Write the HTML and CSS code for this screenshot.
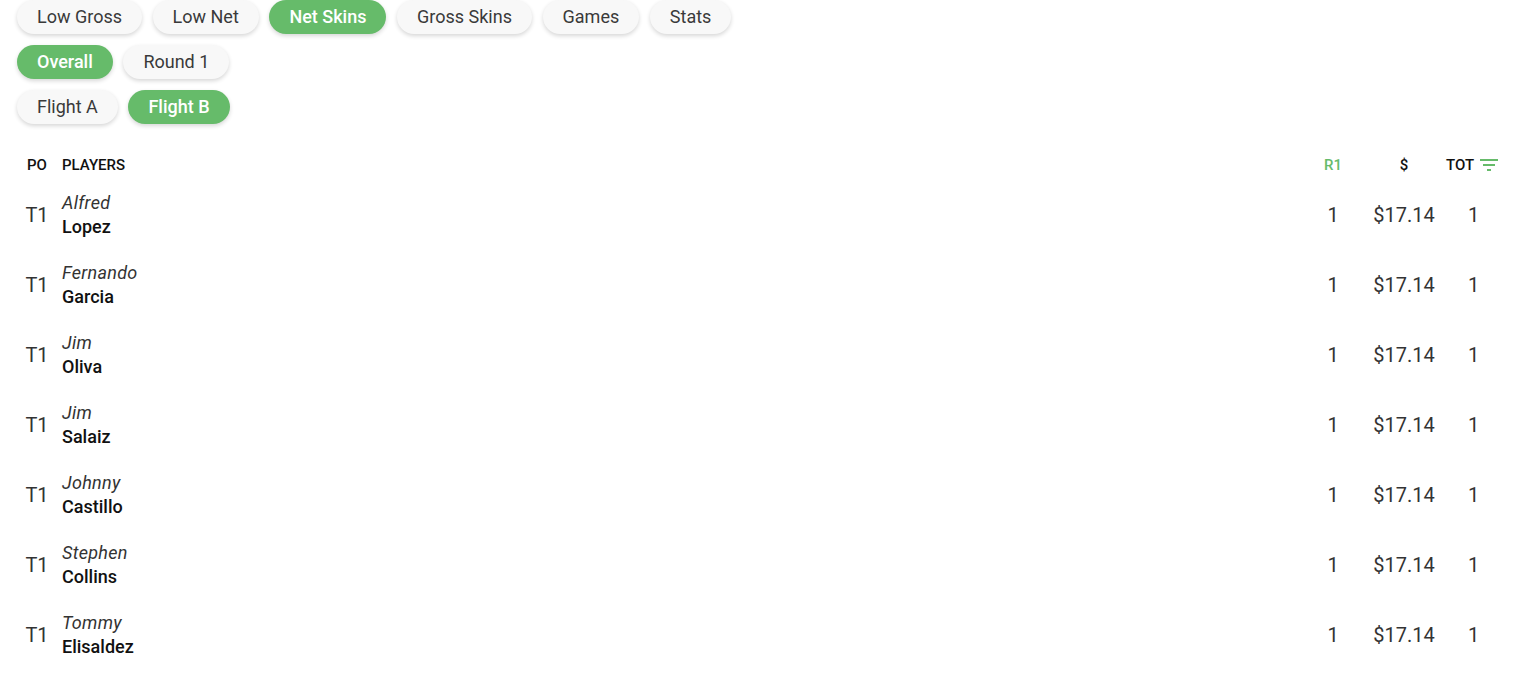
FILE: index.html
```html
<!DOCTYPE html>
<html>
<head>
<meta charset="utf-8">
<link rel="stylesheet" href="styles.css">
</head>
<body>
<div class="page">
  <div class="chips">
    <div class="chip-row">
      <span class="chip">Low Gross</span>
      <span class="chip">Low Net</span>
      <span class="chip active">Net Skins</span>
      <span class="chip">Gross Skins</span>
      <span class="chip">Games</span>
      <span class="chip">Stats</span>
    </div>
    <div class="chip-row">
      <span class="chip active">Overall</span>
      <span class="chip">Round 1</span>
    </div>
    <div class="chip-row">
      <span class="chip">Flight A</span>
      <span class="chip active">Flight B</span>
    </div>
  </div>

  <div class="table">
    <div class="row head">
      <div class="c-po">PO</div>
      <div class="c-player">PLAYERS</div>
      <div class="c-num green">R1</div>
      <div class="c-num">$</div>
      <div class="c-num tot">TOT <svg class="filter" viewBox="0 0 24 24" width="24" height="24"><path fill="#66bb6a" d="M10 18h4v-2h-4v2zM3 6v2h18V6H3zm3 7h12v-2H6v2z"/></svg></div>
    </div>

    <div class="row">
      <div class="c-po pos">T1</div>
      <div class="c-player"><div class="first">Alfred</div><div class="last">Lopez</div></div>
      <div class="c-num val">1</div><div class="c-num val">$17.14</div><div class="c-num val">1</div>
    </div>
    <div class="row">
      <div class="c-po pos">T1</div>
      <div class="c-player"><div class="first">Fernando</div><div class="last">Garcia</div></div>
      <div class="c-num val">1</div><div class="c-num val">$17.14</div><div class="c-num val">1</div>
    </div>
    <div class="row">
      <div class="c-po pos">T1</div>
      <div class="c-player"><div class="first">Jim</div><div class="last">Oliva</div></div>
      <div class="c-num val">1</div><div class="c-num val">$17.14</div><div class="c-num val">1</div>
    </div>
    <div class="row">
      <div class="c-po pos">T1</div>
      <div class="c-player"><div class="first">Jim</div><div class="last">Salaiz</div></div>
      <div class="c-num val">1</div><div class="c-num val">$17.14</div><div class="c-num val">1</div>
    </div>
    <div class="row">
      <div class="c-po pos">T1</div>
      <div class="c-player"><div class="first">Johnny</div><div class="last">Castillo</div></div>
      <div class="c-num val">1</div><div class="c-num val">$17.14</div><div class="c-num val">1</div>
    </div>
    <div class="row">
      <div class="c-po pos">T1</div>
      <div class="c-player"><div class="first">Stephen</div><div class="last">Collins</div></div>
      <div class="c-num val">1</div><div class="c-num val">$17.14</div><div class="c-num val">1</div>
    </div>
    <div class="row">
      <div class="c-po pos">T1</div>
      <div class="c-player"><div class="first">Tommy</div><div class="last">Elisaldez</div></div>
      <div class="c-num val">1</div><div class="c-num val">$17.14</div><div class="c-num val">1</div>
    </div>
  </div>
</div>
</body>
</html>
```
FILE: styles.css
```css
* { box-sizing: border-box; }
html, body { margin: 0; padding: 0; background: #fff; }
body { font-family: Roboto, "Liberation Sans", sans-serif; color: #222; overflow: hidden; }

.page { padding: 0 32px 0 17px; }

.chips { display: flex; flex-direction: column; gap: 11px; }
.chip-row { display: flex; gap: 10.6px; }
.chip {
  height: 34px;
  padding: 0 20px;
  border-radius: 17px;
  background: #f8f8f8;
  color: #3a3a3a;
  font-size: 18px;
  line-height: 34px;
  box-shadow: 0 2px 4px rgba(0,0,0,0.16);
  white-space: nowrap;
}
.chip.active { background: #66bb6a; color: #fff; font-weight: 500; }

.table { margin-top: 26px; }
.row {
  display: grid;
  grid-template-columns: 40px 1fr 66px 76px 63px;
  align-items: center;
  height: 70px;
}
.row.head { height: 30px; font-size: 15px; font-weight: 500; color: #111; }
.c-po { text-align: center; }
.c-player { padding-left: 5px; }
.c-num { text-align: center; }
.green { color: #66bb6a; }
.tot { display: flex; align-items: center; justify-content: center; gap: 3px; }
.filter { display: block; }

.pos { font-size: 20px; color: #333; }
.val { font-size: 20px; color: #333; }
.first { font-size: 18px; font-style: italic; color: #333; line-height: 24px; letter-spacing: 0.3px; }
.last { font-size: 18px; font-weight: 500; color: #111; line-height: 24px; }
```
